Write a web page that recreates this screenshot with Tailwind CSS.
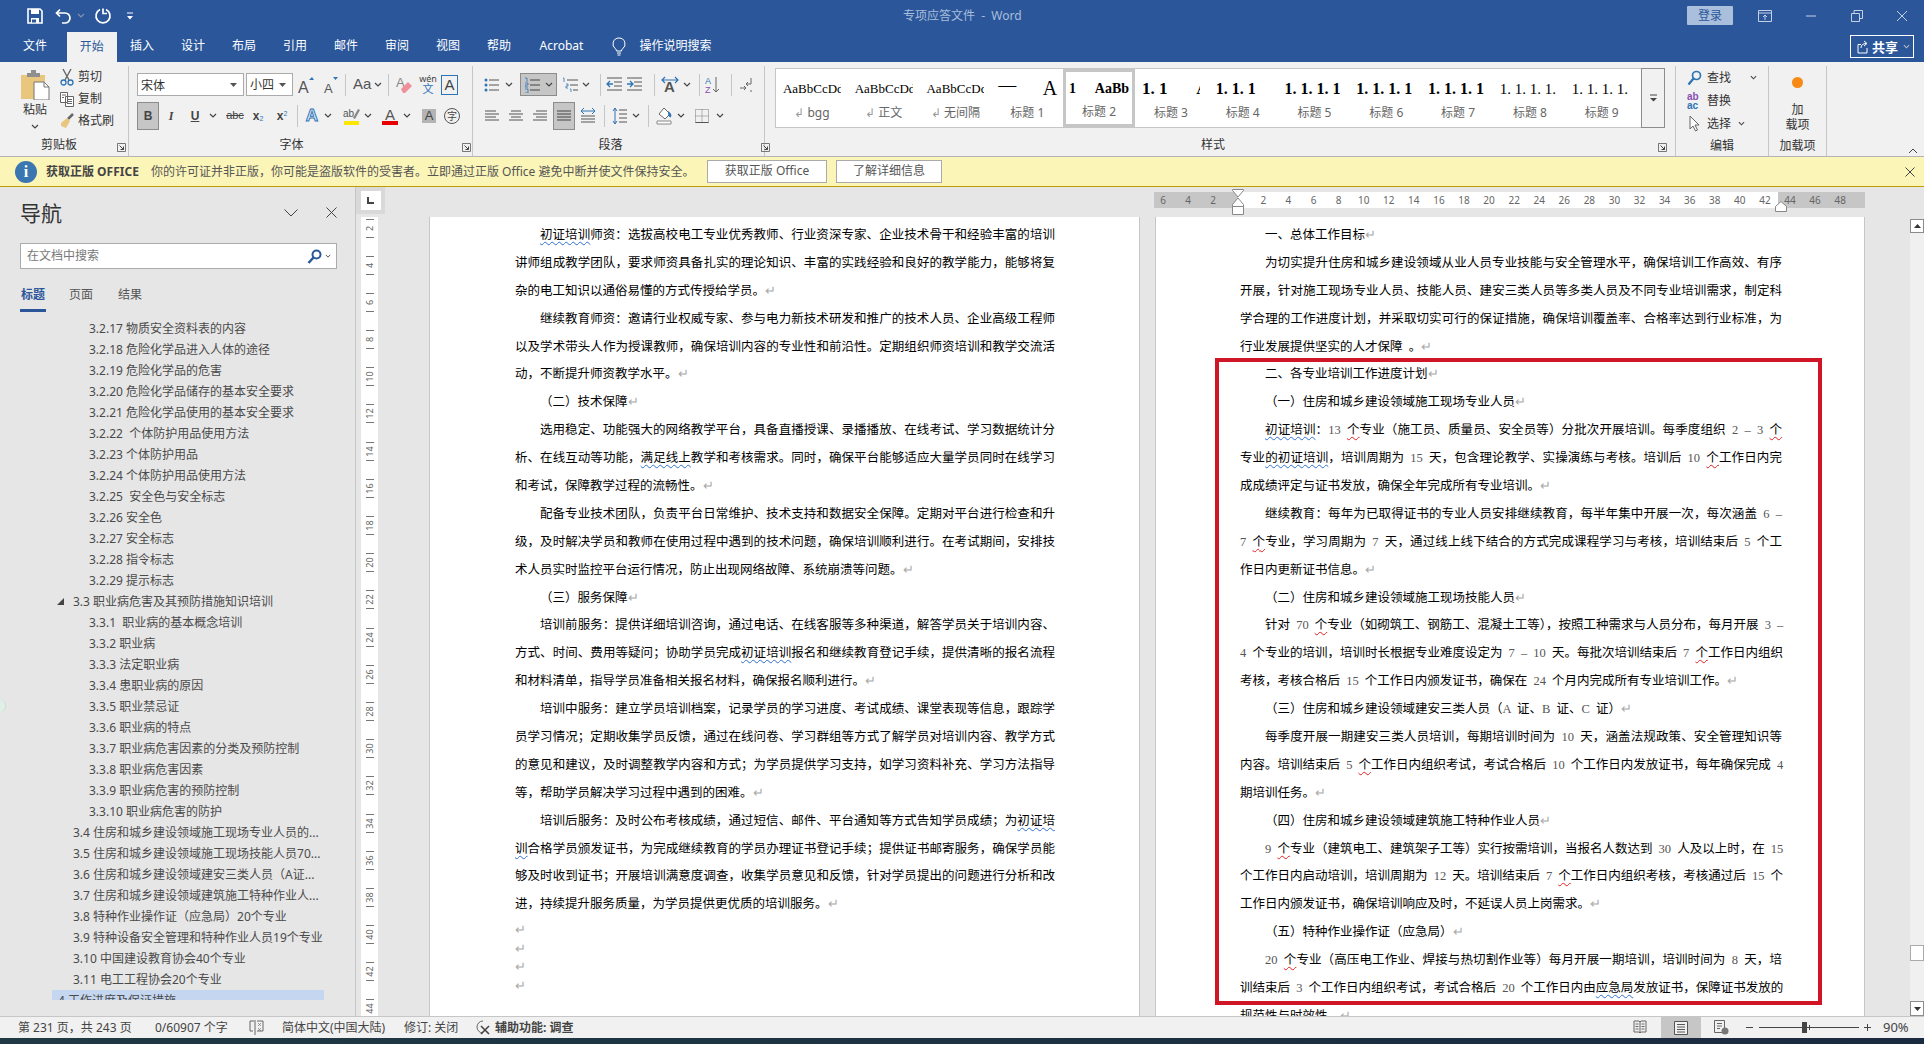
<!DOCTYPE html>
<html lang="zh-CN">
<head>
<meta charset="utf-8">
<title>专项应答文件 - Word</title>
<script src="https://cdn.jsdelivr.net/npm/@tailwindcss/browser@4"></script>
</head>
<body class="m-0 overflow-hidden bg-[#e6e6e6]">
<svg class="hidden" xmlns="http://www.w3.org/2000/svg">
  <symbol id="c" viewBox="0 0 8 5"><path d="M1 1l3 3 3-3" fill="none" stroke="#444" stroke-width="1.2"/></symbol>
  <symbol id="lau" viewBox="0 0 9 9"><path d="M.5 8.5v-8h8M.5.5v8h8v-8" fill="none" stroke="#777"/><path d="M2.5 2.5l4 4M6.5 3.5v3h-3" fill="none" stroke="#444"/></symbol>
  <symbol id="ll" viewBox="0 0 16 14"><path d="M1 2h11M1 5h14M1 8h11M1 11h14" stroke="#555" fill="none"/></symbol>
  <symbol id="lc" viewBox="0 0 16 14"><path d="M3 2h10M1 5h14M3 8h10M1 11h14" stroke="#555" fill="none"/></symbol>
  <symbol id="lr" viewBox="0 0 16 14"><path d="M4 2h11M1 5h14M4 8h11M1 11h14" stroke="#555" fill="none"/></symbol>
  <symbol id="lj" viewBox="0 0 16 14"><path d="M1 2h14M1 5h14M1 8h14M1 11h14" stroke="#444" fill="none"/></symbol>
</svg>
<div class="w-[1924px] h-[1044px] overflow-hidden relative flex flex-col text-[12px] text-[#444] [font-family:'Noto_Sans','Noto_Sans_CJK_SC',sans-serif]">

  <!-- title bar -->
  <div class="h-[31px] shrink-0 bg-[#2b579a] flex items-center">
    <div class="w-[903px] flex items-center pl-[25px]">
      <svg width="20" height="20" viewBox="0 0 20 20"><path d="M3 3h12l2 2v12H3z" fill="none" stroke="#fff" stroke-width="1.6"/><path d="M6 3h8v5H6zM6 12h8v5H6z" fill="#fff"/><path d="M7 13.5h4v3H7z" fill="#2b579a"/></svg>
      <svg class="ml-[9px]" width="20" height="20" viewBox="0 0 20 20"><path d="M6 3.5L2.500 7 6 10.500" fill="none" stroke="#fff" stroke-width="1.7"/><path d="M3 7h8a5 5 0 0 1 0 10H8" fill="none" stroke="#fff" stroke-width="1.7"/></svg>
      <svg class="ml-[3px] w-[8px] h-[5px] invert opacity-60"><use href="#c"/></svg>
      <svg class="ml-[8px]" width="20" height="20" viewBox="0 0 20 20"><path d="M7 3.500a7 7 0 1 0 6 0" fill="none" stroke="#fff" stroke-width="1.700"/><path d="M10 2.500v5h4" fill="none" stroke="#fff" stroke-width="1.700"/></svg>
      <svg class="ml-[12px]" width="10" height="10" viewBox="0 0 10 10"><path d="M2 2h6" stroke="#fff"/><path d="M2 5h6L5 8.500z" fill="#fff"/></svg>
    </div>
    <div class="text-[#a8bddb] text-[12px] whitespace-pre">专项应答文件  -  Word</div>
    <div class="ml-auto flex items-center">
      <div class="w-[46px] h-[19px] bg-[#a9bfdc] rounded-[1px] text-[#2b579a] text-center leading-[19px]">登录</div>
      <div class="ml-[9px] w-[46px] flex justify-center"><svg width="14" height="12" viewBox="0 0 14 12"><path d="M.5.5h13v11H.5zM.5 3h13M7 10V5M5 7l2-2 2 2" fill="none" stroke="#c5d2e6"/></svg></div>
      <div class="w-[46px] flex justify-center"><svg width="12" height="2" viewBox="0 0 12 2"><path d="M1 1h10" stroke="#c5d2e6"/></svg></div>
      <div class="w-[46px] flex justify-center"><svg width="12" height="12" viewBox="0 0 12 12"><path d="M.5 3.500h8v8h-8zM3 3V.5h8.500v8H9" fill="none" stroke="#c5d2e6"/></svg></div>
      <div class="w-[44px] flex justify-center"><svg width="12" height="12" viewBox="0 0 12 12"><path d="M1 1l10 10M11 1L1 11" stroke="#c5d2e6"/></svg></div>
    </div>
  </div>

  <!-- tabs -->
  <div class="h-[31px] shrink-0 bg-[#2b579a] flex items-end text-white text-[12px] pl-[10px]">
    <div class="w-[50px] h-[31px] leading-[30px] text-center">文件</div>
    <div class="ml-[7px] w-[49.500px] h-[30px] leading-[29px] text-center bg-[#f1f1f1] text-[#2b579a]">开始</div>
    <div class="w-[51px] h-[31px] leading-[30px] text-center">插入</div>
    <div class="w-[51px] h-[31px] leading-[30px] text-center">设计</div>
    <div class="w-[51px] h-[31px] leading-[30px] text-center">布局</div>
    <div class="w-[51px] h-[31px] leading-[30px] text-center">引用</div>
    <div class="w-[51px] h-[31px] leading-[30px] text-center">邮件</div>
    <div class="w-[51px] h-[31px] leading-[30px] text-center">审阅</div>
    <div class="w-[51px] h-[31px] leading-[30px] text-center">视图</div>
    <div class="w-[51px] h-[31px] leading-[30px] text-center">帮助</div>
    <div class="w-[74px] h-[31px] leading-[30px] text-center">Acrobat</div>
    <div class="ml-[13px] w-[16px] h-[31px] flex items-center"><svg width="14" height="19" viewBox="0 0 14 19"><path d="M7 1a6 6 0 0 0-3.500 10.900c.7.6 1 1.300 1 2.100h5c0-.8.3-1.500 1-2.100A6 6 0 0 0 7 1zM5 16h4M5.500 18h3" fill="none" stroke="#fff"/></svg></div>
    <div class="ml-[12px] h-[31px] leading-[30px]">操作说明搜索</div>
    <div class="ml-auto mr-[10px] mb-[4px] w-[64px] h-[23px] border border-white flex items-center pl-[6px] gap-[3px] font-bold text-[13px]">
      <svg width="12" height="14" viewBox="0 0 12 14"><path d="M1 4.500h3M1 4.500V13h9V8M4 8c0-3 2-4.500 5-4.500M7 1l3 2.500L7 6" fill="none" stroke="#fff"/></svg>
      <span class="leading-[20px]">共享</span>
      <svg class="ml-[2px] w-[7px] h-[5px] invert"><use href="#c"/></svg>
    </div>
  </div>

  <!-- ribbon -->
  <div class="h-[95px] shrink-0 bg-[#f1f1f1] border-b border-[#b4b4b4] flex relative">
    <!-- clipboard -->
    <div class="w-[129px] h-[90px] mt-[4px] border-r border-[#c6c6c6] flex flex-col shrink-0">
      <div class="flex h-[66px]">
        <div class="w-[60px] flex flex-col items-center pt-[4px] pl-[10px]">
          <svg width="30" height="30" viewBox="0 0 30 30"><path d="M1 5h24v24H1z" fill="#e8c67e"/><path d="M7 3h4V0h5v3h4v4H7z" fill="#8f8f8f"/><path d="M14 12h10l5 5v13H14z" fill="#fff" stroke="#777"/><path d="M24 12v5h5" fill="none" stroke="#777"/></svg>
          <div class="mt-[2px] leading-[16px] text-[#333]">粘贴</div>
          <svg class="mt-[6px] w-[8px] h-[5px]"><use href="#c"/></svg>
        </div>
        <div class="flex flex-col text-[#333]">
          <div class="h-[23px] flex items-center gap-[4px]"><svg width="14" height="18" viewBox="0 0 14 18"><path d="M3 1l6 11M11 1L5 12" stroke="#666" fill="none" stroke-width="1.400"/><circle cx="3.500" cy="14.500" r="2.500" fill="none" stroke="#2f74b5" stroke-width="1.300"/><circle cx="10.500" cy="14.500" r="2.500" fill="none" stroke="#2f74b5" stroke-width="1.300"/></svg>剪切</div>
          <div class="h-[23px] flex items-center gap-[4px]"><svg width="14" height="15" viewBox="0 0 14 15"><path d="M.5.5h7v10h-7zM5.500 4.500h8v10h-8zM2 3h4M2 5.500h2M7 7.500h5M7 9.500h5M7 11.500h5" fill="#fff" stroke="#666"/></svg>复制</div>
          <div class="h-[23px] flex items-center gap-[4px]"><svg width="14" height="16" viewBox="0 0 14 16"><path d="M8 6l5-5" stroke="#666" stroke-width="2.500"/><path d="M1 10l6-5 3 3-4 7-5-2z" fill="#e8c67e"/></svg>格式刷</div>
        </div>
      </div>
      <div class="relative h-[24px] leading-[26px] text-center pr-[10px] text-[#333]">剪贴板<svg class="absolute left-[117px] top-[11px] w-[9px] h-[9px]"><use href="#lau"/></svg></div>
    </div>

    <!-- font -->
    <div class="w-[344px] h-[90px] mt-[4px] border-r border-[#c6c6c6] shrink-0 flex flex-col pl-[8px] text-[#444]">
      <div class="flex items-center h-[23px] mt-[7px]">
        <div class="w-[107px] h-[23px] bg-white border border-[#ababab] flex items-center justify-between pl-[3px] pr-[6px] text-[#333] [font-family:'Noto_Sans_CJK_SC',sans-serif]">宋体<svg class="w-[7px] h-[4px]" viewBox="0 0 7 4"><path d="M0 0h7L3.500 4z" fill="#555"/></svg></div>
        <div class="ml-[2px] w-[47px] h-[23px] bg-white border border-[#ababab] flex items-center justify-between pl-[3px] pr-[6px] text-[#333]">小四<svg class="w-[7px] h-[4px]" viewBox="0 0 7 4"><path d="M0 0h7L3.500 4z" fill="#555"/></svg></div>
        <div class="ml-[1px] w-[24px] flex justify-center"><svg width="16" height="18" viewBox="0 0 16 18"><text x="0" y="17" font-size="16" fill="#555" font-family="Liberation Sans">A</text><path d="M11 4l3-3 2 3z" fill="#2f74b5"/></svg></div>
        <div class="w-[24px] flex justify-center"><svg width="15" height="18" viewBox="0 0 15 18"><text x="1" y="17" font-size="13" fill="#555" font-family="Liberation Sans">A</text><path d="M10 1h5l-2.500 3z" fill="#2f74b5"/></svg></div>
        <div class="ml-[3px] w-px h-[22px] bg-[#c6c6c6]"></div>
        <div class="ml-[7px] flex items-center gap-[3px] w-[30px] text-[15px] text-[#555]"><span class="[font-family:'Liberation_Sans']">Aa</span><svg class="w-[8px] h-[5px] shrink-0"><use href="#c"/></svg></div>
        <div class="ml-[5px] w-px h-[22px] bg-[#c6c6c6]"></div>
        <div class="ml-[5px] w-[20px] flex justify-center"><svg width="18" height="20" viewBox="0 0 18 20"><text x="1" y="12" font-size="13" fill="#888" font-family="Liberation Sans">A</text><path d="M6 14l7-7 4 4-7 7H8z" fill="#ee8f9a"/></svg></div>
        <div class="ml-[4px] w-[20px] text-center text-[9px] leading-[10px] text-[#444]">wén<br><span class="text-[11px] text-[#2f74b5]">文</span></div>
        <div class="ml-[3px] w-[17px] h-[20px] border border-[#2f74b5] text-center text-[15px] leading-[18px] [font-family:'Liberation_Sans']">A</div>
      </div>
      <div class="flex items-center h-[23px] mt-[8px]">
        <div class="w-[22px] h-[28px] bg-[#c6c6c6] border border-[#8c8c8c] text-center font-bold leading-[26px] text-[12px] [font-family:'Liberation_Sans']">B</div>
        <div class="ml-[1px] w-[22px] text-center italic font-bold text-[12px] [font-family:'Liberation_Serif']">I</div>
        <div class="ml-[2px] w-[22px] text-center underline font-bold [font-family:'Liberation_Sans']">U</div>
        <div class="w-[14px] flex justify-center"><svg class="w-[8px] h-[5px]"><use href="#c"/></svg></div>
        <div class="ml-[2px] w-[26px] text-center line-through text-[11px] [font-family:'Liberation_Sans']">abc</div>
        <div class="w-[20px] text-center font-bold [font-family:'Liberation_Sans']">x<sub class="text-[7px] text-[#2f74b5] font-normal">2</sub></div>
        <div class="ml-[4px] w-[20px] text-center font-bold [font-family:'Liberation_Sans']">x<sup class="text-[7px] text-[#2f74b5] font-normal">2</sup></div>
        <div class="ml-[5px] w-px h-[22px] bg-[#c6c6c6]"></div>
        <div class="ml-[4px] w-[20px] text-center text-[17px] font-bold text-[#eaf2fa] [-webkit-text-stroke:1px_#2f74b5] [font-family:'Liberation_Sans']">A</div>
        <div class="w-[12px] flex justify-center"><svg class="w-[8px] h-[5px]"><use href="#c"/></svg></div>
        <div class="ml-[6px] w-[22px] flex justify-center"><svg width="17" height="20" viewBox="0 0 17 20"><text x="0" y="11" font-size="10" fill="#555" font-family="Liberation Sans">ab</text><path d="M10 12l5-9 2 1-5 9z" fill="#888"/><path d="M1 15h15v4H1z" fill="#ffe600"/></svg></div>
        <div class="w-[12px] flex justify-center"><svg class="w-[8px] h-[5px]"><use href="#c"/></svg></div>
        <div class="ml-[5px] w-[22px] flex justify-center"><svg width="17" height="20" viewBox="0 0 17 20"><text x="3" y="14" font-size="15" fill="#555" font-family="Liberation Sans">A</text><path d="M0 15h16v4H0z" fill="#e60000"/></svg></div>
        <div class="w-[12px] flex justify-center"><svg class="w-[8px] h-[5px]"><use href="#c"/></svg></div>
        <div class="ml-[6px] w-[20px] flex justify-center"><div class="w-[14px] h-[14px] bg-[#b4b4b4] text-center text-[13px] leading-[14px] [font-family:'Liberation_Sans']">A</div></div>
        <div class="ml-[3px] w-[20px] flex justify-center"><div class="w-[16px] h-[16px] rounded-full border border-[#555] text-center text-[10px] leading-[14px]">字</div></div>
      </div>
      <div class="relative mt-auto h-[24px] leading-[26px] text-center pr-[26px] text-[#333]">字体<svg class="absolute left-[325px] top-[11px] w-[9px] h-[9px]"><use href="#lau"/></svg></div>
    </div>

    <!-- paragraph -->
    <div class="w-[292px] h-[90px] mt-[4px] border-r border-[#c6c6c6] shrink-0 flex flex-col pl-[7px]">
      <div class="flex items-center h-[23px] mt-[7px]">
        <div class="w-[24px] flex justify-center"><svg width="16" height="16" viewBox="0 0 16 16"><path d="M5 3h10M5 8h10M5 13h10" stroke="#555"/><circle cx="2" cy="3" r="1.500" fill="#2f74b5"/><circle cx="2" cy="8" r="1.500" fill="#2f74b5"/><circle cx="2" cy="13" r="1.500" fill="#2f74b5"/></svg></div>
        <div class="w-[10px] flex justify-center"><svg class="w-[8px] h-[5px]"><use href="#c"/></svg></div>
        <div class="ml-[6px] w-[37px] h-[23px] bg-[#c6c6c6] border border-[#8c8c8c] flex items-center justify-center gap-[5px]"><svg width="15" height="16" viewBox="0 0 15 16"><path d="M5 3h10M5 8h10M5 13h10" stroke="#444"/><path d="M0 1h2v4M0 6h3v2H0v2h3M0 12h3v4H0" fill="none" stroke="#2f74b5" stroke-width=".8"/></svg><svg class="w-[8px] h-[5px]"><use href="#c"/></svg></div>
        <div class="ml-[3px] w-[20px] flex justify-center"><svg width="17" height="16" viewBox="0 0 17 16"><path d="M5 3h11M8 8h8M11 13h5" stroke="#555"/><path d="M1 1h1v4M4 7h2v2H4v2h2M8 12h1v3" fill="none" stroke="#2f74b5" stroke-width=".8"/></svg></div>
        <div class="w-[12px] flex justify-center"><svg class="w-[8px] h-[5px]"><use href="#c"/></svg></div>
        <div class="ml-[8px] w-px h-[22px] bg-[#c6c6c6]"></div>
        <div class="ml-[3px] w-[20px] flex justify-center"><svg width="17" height="15" viewBox="0 0 17 15"><path d="M1 1h15M8 5h8M8 9h8M1 13h15" stroke="#555"/><path d="M7 7H1M4 4L1 7l3 3" fill="none" stroke="#2f74b5" stroke-width="1.300"/></svg></div>
        <div class="w-[20px] flex justify-center"><svg width="17" height="15" viewBox="0 0 17 15"><path d="M1 1h15M8 5h8M8 9h8M1 13h15" stroke="#555"/><path d="M1 7h6M4 4l3 3-3 3" fill="none" stroke="#2f74b5" stroke-width="1.300"/></svg></div>
        <div class="ml-[10px] w-px h-[22px] bg-[#c6c6c6]"></div>
        <div class="ml-[3px] w-[24px] flex justify-center"><svg width="18" height="17" viewBox="0 0 18 17"><text x="3" y="16" font-size="15" font-weight="bold" fill="#555" font-family="Liberation Sans">A</text><path d="M1 4h16M4 1L1 4l3 3M14 1l3 3-3 3" fill="none" stroke="#2f74b5" stroke-width="1.200"/></svg></div>
        <div class="w-[10px] flex justify-center"><svg class="w-[8px] h-[5px]"><use href="#c"/></svg></div>
        <div class="ml-[7px] w-px h-[22px] bg-[#c6c6c6]"></div>
        <div class="ml-[3px] w-[20px] flex justify-center"><svg width="16" height="18" viewBox="0 0 16 18"><text x="0" y="8" font-size="9" fill="#2f74b5" font-family="Liberation Sans">A</text><text x="0" y="17" font-size="9" fill="#8a4fb5" font-family="Liberation Sans">Z</text><path d="M11 1v15M8 13l3 3 3-3" fill="none" stroke="#666"/></svg></div>
        <div class="ml-[8px] w-px h-[22px] bg-[#c6c6c6]"></div>
        <div class="ml-[4px] w-[20px] flex justify-center"><svg width="14" height="16" viewBox="0 0 14 16"><path d="M12 1v6H7M9 5L7 7l2 2M1 11h6M5 9l2 2-2 2M12 13v2" fill="none" stroke="#666"/></svg></div>
      </div>
      <div class="flex items-center h-[23px] mt-[8px]">
        <div class="w-[24px] flex justify-center"><svg class="w-[16px] h-[14px]"><use href="#ll"/></svg></div>
        <div class="w-[24px] flex justify-center"><svg class="w-[16px] h-[14px]"><use href="#lc"/></svg></div>
        <div class="w-[24px] flex justify-center"><svg class="w-[16px] h-[14px]"><use href="#lr"/></svg></div>
        <div class="ml-[1px] w-[22px] h-[28px] bg-[#c6c6c6] border border-[#8c8c8c] flex items-center justify-center"><svg class="w-[16px] h-[14px]"><use href="#lj"/></svg></div>
        <div class="ml-[1px] w-[24px] flex justify-center"><svg width="16" height="17" viewBox="0 0 16 17"><path d="M1 4h14M4 1L1 4l3 3M12 1l3 3-3 3" fill="none" stroke="#2f74b5"/><path d="M1 9h14M1 12h14M1 15h14" stroke="#555"/></svg></div>
        <div class="ml-[4px] w-px h-[22px] bg-[#c6c6c6]"></div>
        <div class="ml-[2px] w-[24px] flex justify-center"><svg width="15" height="18" viewBox="0 0 15 18"><path d="M7 3h8M7 7h8M7 11h8M7 15h8" stroke="#555"/><path d="M3 1v16M1 4l2-3 2 3M1 14l2 3 2-3" fill="none" stroke="#2f74b5"/></svg></div>
        <div class="w-[10px] flex justify-center"><svg class="w-[8px] h-[5px]"><use href="#c"/></svg></div>
        <div class="ml-[7px] w-px h-[22px] bg-[#c6c6c6]"></div>
        <div class="ml-[3px] w-[24px] flex justify-center"><svg width="17" height="19" viewBox="0 0 17 19"><path d="M3 8l5-6 6 6-5 5z" fill="#fff" stroke="#666"/><path d="M12 5c3 2 4 4 3 6-2 1-3-1-3-6z" fill="#2f74b5"/><path d="M1 15h14v3H1z" fill="#fff" stroke="#888"/></svg></div>
        <div class="w-[10px] flex justify-center"><svg class="w-[8px] h-[5px]"><use href="#c"/></svg></div>
        <div class="ml-[4px] w-[24px] flex justify-center"><svg width="14" height="14" viewBox="0 0 14 14"><path d="M.5.500h13v13H.5zM7 .5v13M.5 7h13" fill="none" stroke="#777" stroke-dasharray="1 1"/><path d="M.5 13.500h13" stroke="#555"/></svg></div>
        <div class="w-[12px] flex justify-center"><svg class="w-[8px] h-[5px]"><use href="#c"/></svg></div>
      </div>
      <div class="relative mt-auto h-[24px] leading-[26px] text-center pr-[23px] text-[#333]">段落<svg class="absolute left-[281px] top-[11px] w-[9px] h-[9px]"><use href="#lau"/></svg></div>
    </div>

    <!-- styles -->
    <div class="w-[911px] h-[90px] mt-[4px] border-r border-[#c6c6c6] shrink-0 flex flex-col pl-[10px]">
      <div class="flex h-[60px] mt-[2px] w-[890px]">
        <div class="w-[866px] h-[60px] bg-white border-y border-l border-[#c6c6c6] flex text-[#666] overflow-hidden">
          <div class="w-[71.800px] shrink-0 flex flex-col items-center"><div class="h-[34px] w-[58px] overflow-hidden whitespace-nowrap leading-[40px] text-[13px] text-black [font-family:'Liberation_Serif']">AaBbCcDdE</div><div class="h-[24px] leading-[20px] whitespace-pre"><span class="text-[#999]">↲ </span>bgg</div></div>
          <div class="w-[71.800px] shrink-0 flex flex-col items-center"><div class="h-[34px] w-[58px] overflow-hidden whitespace-nowrap leading-[40px] text-[13px] text-black [font-family:'Liberation_Serif']">AaBbCcDdE</div><div class="h-[24px] leading-[20px] whitespace-pre"><span class="text-[#999]">↲ </span>正文</div></div>
          <div class="w-[71.800px] shrink-0 flex flex-col items-center"><div class="h-[34px] w-[58px] overflow-hidden whitespace-nowrap leading-[40px] text-[13px] text-black [font-family:'Liberation_Serif']">AaBbCcDdE</div><div class="h-[24px] leading-[20px] whitespace-pre"><span class="text-[#999]">↲ </span>无间隔</div></div>
          <div class="w-[71.800px] shrink-0 flex flex-col items-center"><div class="h-[34px] w-[60px] flex justify-between items-center text-[20px] leading-[40px] pt-[3px] text-black [font-family:'Liberation_Serif','Noto_Sans_CJK_SC']"><span class="font-light">一</span><span>A</span></div><div class="h-[24px] leading-[20px]">标题 1</div></div>
          <div class="w-[71.800px] shrink-0 h-[58px] flex flex-col items-center border-[3px] border-[#c6c6c6]"><div class="h-[31px] w-[60px] flex justify-between overflow-hidden whitespace-nowrap leading-[34px] text-[14px] font-bold text-black [font-family:'Liberation_Serif']"><span>1</span><span class="ml-[10px]">AaBb</span></div><div class="h-[22px] leading-[20px]">标题 2</div></div>
          <div class="w-[71.800px] shrink-0 flex flex-col items-center"><div class="h-[34px] w-[58px] overflow-hidden whitespace-pre leading-[40px] text-[17px] font-bold text-black [font-family:'Liberation_Serif']">1. 1       A</div><div class="h-[24px] leading-[20px]">标题 3</div></div>
          <div class="w-[71.800px] shrink-0 flex flex-col items-center"><div class="h-[34px] w-[62px] overflow-hidden whitespace-pre leading-[40px] text-[16px] font-bold text-black [font-family:'Liberation_Serif']"> 1. 1. 1</div><div class="h-[24px] leading-[20px]">标题 4</div></div>
          <div class="w-[71.800px] shrink-0 flex flex-col items-center"><div class="h-[34px] w-[60px] overflow-hidden whitespace-pre leading-[40px] text-[16px] font-bold text-black [font-family:'Liberation_Serif']">1. 1. 1. 1</div><div class="h-[24px] leading-[20px]">标题 5</div></div>
          <div class="w-[71.800px] shrink-0 flex flex-col items-center"><div class="h-[34px] w-[60px] overflow-hidden whitespace-pre leading-[40px] text-[16px] font-bold text-black [font-family:'Liberation_Serif']">1. 1. 1. 1</div><div class="h-[24px] leading-[20px]">标题 6</div></div>
          <div class="w-[71.800px] shrink-0 flex flex-col items-center"><div class="h-[34px] w-[60px] overflow-hidden whitespace-pre leading-[40px] text-[16px] font-bold text-black [font-family:'Liberation_Serif']">1. 1. 1. 1</div><div class="h-[24px] leading-[20px]">标题 7</div></div>
          <div class="w-[71.800px] shrink-0 flex flex-col items-center"><div class="h-[34px] w-[60px] overflow-hidden whitespace-pre leading-[40px] text-[15px] text-black [font-family:'Liberation_Serif']">1. 1. 1. 1.</div><div class="h-[24px] leading-[20px]">标题 8</div></div>
          <div class="w-[71.800px] shrink-0 flex flex-col items-center"><div class="h-[34px] w-[60px] overflow-hidden whitespace-pre leading-[40px] text-[15px] text-black [font-family:'Liberation_Serif']">1. 1. 1. 1.</div><div class="h-[24px] leading-[20px]">标题 9</div></div>
        </div>
        <div class="w-[24px] h-[60px] bg-[#f1f1f1] border border-[#8c8c8c] flex flex-col items-center justify-center"><svg width="9" height="8" viewBox="0 0 9 8"><path d="M1 1h7" stroke="#444"/><path d="M1 4h7L4.500 7.500z" fill="#444"/></svg></div>
      </div>
      <div class="relative mt-auto h-[24px] leading-[26px] text-center text-[#333]"><span class="block w-[876px]">样式</span><svg class="absolute left-[883px] top-[11px] w-[9px] h-[9px]"><use href="#lau"/></svg></div>
    </div>

    <!-- editing -->
    <div class="w-[93px] h-[90px] mt-[4px] border-r border-[#c6c6c6] shrink-0 flex flex-col text-[#333] pl-[11px]">
      <div class="h-[23px] flex items-center gap-[5px]"><svg width="15" height="16" viewBox="0 0 15 16"><circle cx="9.500" cy="5.500" r="4" fill="none" stroke="#2f74b5" stroke-width="1.700"/><path d="M6.500 8.500L1.500 14.500" stroke="#2f74b5" stroke-width="2.300"/></svg>查找<svg class="ml-[14px] w-[7px] h-[5px]"><use href="#c"/></svg></div>
      <div class="h-[23px] flex items-center gap-[5px]"><span class="w-[15px] text-[10px] leading-[9px] font-bold [font-family:'Liberation_Sans']"><span class="text-[#8a4fb5]">ab</span><br><span class="text-[#2f74b5]">ac</span></span>替换</div>
      <div class="h-[23px] flex items-center gap-[5px]"><svg width="15" height="17" viewBox="0 0 15 17"><path d="M3 1v13l3-3 2.500 5 2-1-2.500-5h4z" fill="#fff" stroke="#666"/></svg>选择<svg class="ml-[2px] w-[7px] h-[5px]"><use href="#c"/></svg></div>
      <div class="mt-auto h-[21px] leading-[21px] text-center pr-[11px]">编辑</div>
    </div>

    <!-- add-ins -->
    <div class="w-[58px] h-[90px] mt-[4px] border-r border-[#c6c6c6] shrink-0 flex flex-col items-center text-[#333]">
      <div class="mt-[11px] w-[11px] h-[11px] rounded-full bg-[#f68a12] blur-[0.5px]"></div>
      <div class="mt-[14px] leading-[15px] text-center">加<br>载项</div>
      <div class="mt-auto h-[24px] leading-[28px]">加载项</div>
    </div>
    <svg class="absolute right-[6px] bottom-[2px]" width="10" height="6" viewBox="0 0 10 6"><path d="M1 5l4-4 4 4" fill="none" stroke="#444"/></svg>
  </div>

  <!-- message bar -->
  <div class="h-[30px] shrink-0 bg-[#fcf5b8] border-b border-[#c19c00] flex items-center text-[#555] pl-[15px]">
    <div class="w-[22px] h-[22px] rounded-full bg-[#3a76b0] text-white text-center font-bold text-[16px] leading-[22px] [font-family:'Liberation_Serif']">i</div>
    <div class="ml-[9px] w-[105px] font-bold text-[#444] whitespace-nowrap">获取正版 OFFICE</div>
    <div class="whitespace-nowrap w-[556px] text-[#555]">你的许可证并非正版，你可能是盗版软件的受害者。立即通过正版 Office 避免中断并使文件保持安全。</div>
    <div class="w-[120px] h-[23px] bg-white border border-[#aaa] text-center leading-[20px] whitespace-nowrap">获取正版 Office</div>
    <div class="ml-[9px] w-[106px] h-[23px] bg-white border border-[#aaa] text-center leading-[20px]">了解详细信息</div>
    <svg class="ml-auto mr-[9px]" width="10" height="10" viewBox="0 0 10 10"><path d="M.5.5l9 9M9.500.5l-9 9" stroke="#444"/></svg>
  </div>

  <!-- main -->
  <div class="h-[829px] shrink-0 flex overflow-hidden">
    <!-- nav -->
    <div class="w-[356px] shrink-0 border-r border-[#c6c6c6] flex flex-col pl-[20px] relative">
      <div class="h-[52px] flex items-center pr-[18px] pb-[1px]">
        <span class="text-[21px] text-[#333] leading-[50px]">导航</span>
        <svg class="ml-auto" width="14" height="8" viewBox="0 0 14 8"><path d="M.5.500L7 7l6.500-6.500" fill="none" stroke="#444"/></svg>
        <svg class="ml-[28px]" width="11" height="11" viewBox="0 0 11 11"><path d="M.5.5l10 10M10.500.5l-10 10" stroke="#444"/></svg>
      </div>
      <div class="mt-[4px] w-[317px] h-[26px] bg-white border border-[#ababab] flex items-center pl-[6px] pr-[5px] text-[#777]">
        在文档中搜索
        <svg class="ml-auto" width="15" height="15" viewBox="0 0 15 15"><circle cx="9.500" cy="5.500" r="4" fill="none" stroke="#2b579a" stroke-width="2"/><path d="M6.500 8.500L1.500 14" stroke="#2b579a" stroke-width="2.500"/></svg>
        <svg class="ml-[3px] w-[6px] h-[4px]"><use href="#c"/></svg>
      </div>
      <div class="flex mt-[14px] h-[29px] text-[#555]">
        <div class="w-[26px] h-[29px] border-b-[3px] border-[#2b579a] text-[#2b579a] font-bold text-center leading-[24px]">标题</div>
        <div class="ml-[23px] leading-[24px]">页面</div>
        <div class="ml-[25px] leading-[24px]">结果</div>
      </div>
      <div class="mt-[6px] h-[682px] overflow-hidden -ml-[20px] w-[324px] *:h-[21px] *:leading-[21px] *:whitespace-pre text-[#4a4a4a]">
        <div class="pl-[89px]">3.2.17 物质安全资料表的内容</div>
        <div class="pl-[89px]">3.2.18 危险化学品进入人体的途径</div>
        <div class="pl-[89px]">3.2.19 危险化学品的危害</div>
        <div class="pl-[89px]">3.2.20 危险化学品储存的基本安全要求</div>
        <div class="pl-[89px]">3.2.21 危险化学品使用的基本安全要求</div>
        <div class="pl-[89px]">3.2.22  个体防护用品使用方法</div>
        <div class="pl-[89px]">3.2.23 个体防护用品</div>
        <div class="pl-[89px]">3.2.24 个体防护用品使用方法</div>
        <div class="pl-[89px]">3.2.25  安全色与安全标志</div>
        <div class="pl-[89px]">3.2.26 安全色</div>
        <div class="pl-[89px]">3.2.27 安全标志</div>
        <div class="pl-[89px]">3.2.28 指令标志</div>
        <div class="pl-[89px]">3.2.29 提示标志</div>
        <div class="pl-[57px] flex items-center gap-[9px]"><svg width="7" height="7" viewBox="0 0 7 7"><path d="M7 0v7H0z" fill="#444"/></svg><span>3.3 职业病危害及其预防措施知识培训</span></div>
        <div class="pl-[89px]">3.3.1  职业病的基本概念培训</div>
        <div class="pl-[89px]">3.3.2 职业病</div>
        <div class="pl-[89px]">3.3.3 法定职业病</div>
        <div class="pl-[89px]">3.3.4 患职业病的原因</div>
        <div class="pl-[89px]">3.3.5 职业禁忌证</div>
        <div class="pl-[89px]">3.3.6 职业病的特点</div>
        <div class="pl-[89px]">3.3.7 职业病危害因素的分类及预防控制</div>
        <div class="pl-[89px]">3.3.8 职业病危害因素</div>
        <div class="pl-[89px]">3.3.9 职业病危害的预防控制</div>
        <div class="pl-[89px]">3.3.10 职业病危害的防护</div>
        <div class="pl-[73px]">3.4 住房和城乡建设领域施工现场专业人员的...</div>
        <div class="pl-[73px]">3.5 住房和城乡建设领域施工现场技能人员70...</div>
        <div class="pl-[73px]">3.6 住房和城乡建设领域建安三类人员（A证...</div>
        <div class="pl-[73px]">3.7 住房和城乡建设领域建筑施工特种作业人...</div>
        <div class="pl-[73px]">3.8 特种作业操作证（应急局）20个专业</div>
        <div class="pl-[73px]">3.9 特种设备安全管理和特种作业人员19个专业</div>
        <div class="pl-[73px]">3.10 中国建设教育协会40个专业</div>
        <div class="pl-[73px]">3.11 电工工程协会20个专业</div>
        <div class="ml-[52px] pl-[6px] bg-[#c5d6f0]">4 工作进度及保证措施</div>
      </div>
      <div class="absolute left-0 top-[513px] w-[6px] h-[12px] rounded-r-full bg-[#e2efe8] border-r border-[#bfe3cc]"></div>
    </div>

    <!-- vertical ruler -->
    <div class="w-[29px] shrink-0 flex flex-col">
      <div class="h-[27px] w-[29px] shrink-0 bg-[#d9d9d9] flex justify-center items-center"><div class="w-[20px] h-[19px] bg-white flex items-center justify-center"><svg width="7" height="7" viewBox="0 0 7 7"><path d="M1 0v6h6" fill="none" stroke="#444" stroke-width="2"/></svg></div></div>
      <div class="h-[3px] shrink-0"></div>
      <div class="ml-[5px] w-[17px] flex-1 bg-white overflow-hidden text-[9px] text-[#666] *:h-[37.200px] *:flex *:flex-col *:items-center *:justify-center">
        <div class="-mt-[7.600px]"><i class="block w-[8px] h-px bg-[#777]"></i><span class="h-[17px] w-[17px] flex items-center justify-center -rotate-90">2</span><i class="block w-[8px] h-px bg-[#777]"></i></div>
        <div><i class="block w-[8px] h-px bg-[#777]"></i><span class="h-[17px] w-[17px] flex items-center justify-center -rotate-90">4</span><i class="block w-[8px] h-px bg-[#777]"></i></div>
        <div><i class="block w-[8px] h-px bg-[#777]"></i><span class="h-[17px] w-[17px] flex items-center justify-center -rotate-90">6</span><i class="block w-[8px] h-px bg-[#777]"></i></div>
        <div><i class="block w-[8px] h-px bg-[#777]"></i><span class="h-[17px] w-[17px] flex items-center justify-center -rotate-90">8</span><i class="block w-[8px] h-px bg-[#777]"></i></div>
        <div><i class="block w-[8px] h-px bg-[#777]"></i><span class="h-[17px] w-[17px] flex items-center justify-center -rotate-90">10</span><i class="block w-[8px] h-px bg-[#777]"></i></div>
        <div><i class="block w-[8px] h-px bg-[#777]"></i><span class="h-[17px] w-[17px] flex items-center justify-center -rotate-90">12</span><i class="block w-[8px] h-px bg-[#777]"></i></div>
        <div><i class="block w-[8px] h-px bg-[#777]"></i><span class="h-[17px] w-[17px] flex items-center justify-center -rotate-90">14</span><i class="block w-[8px] h-px bg-[#777]"></i></div>
        <div><i class="block w-[8px] h-px bg-[#777]"></i><span class="h-[17px] w-[17px] flex items-center justify-center -rotate-90">16</span><i class="block w-[8px] h-px bg-[#777]"></i></div>
        <div><i class="block w-[8px] h-px bg-[#777]"></i><span class="h-[17px] w-[17px] flex items-center justify-center -rotate-90">18</span><i class="block w-[8px] h-px bg-[#777]"></i></div>
        <div><i class="block w-[8px] h-px bg-[#777]"></i><span class="h-[17px] w-[17px] flex items-center justify-center -rotate-90">20</span><i class="block w-[8px] h-px bg-[#777]"></i></div>
        <div><i class="block w-[8px] h-px bg-[#777]"></i><span class="h-[17px] w-[17px] flex items-center justify-center -rotate-90">22</span><i class="block w-[8px] h-px bg-[#777]"></i></div>
        <div><i class="block w-[8px] h-px bg-[#777]"></i><span class="h-[17px] w-[17px] flex items-center justify-center -rotate-90">24</span><i class="block w-[8px] h-px bg-[#777]"></i></div>
        <div><i class="block w-[8px] h-px bg-[#777]"></i><span class="h-[17px] w-[17px] flex items-center justify-center -rotate-90">26</span><i class="block w-[8px] h-px bg-[#777]"></i></div>
        <div><i class="block w-[8px] h-px bg-[#777]"></i><span class="h-[17px] w-[17px] flex items-center justify-center -rotate-90">28</span><i class="block w-[8px] h-px bg-[#777]"></i></div>
        <div><i class="block w-[8px] h-px bg-[#777]"></i><span class="h-[17px] w-[17px] flex items-center justify-center -rotate-90">30</span><i class="block w-[8px] h-px bg-[#777]"></i></div>
        <div><i class="block w-[8px] h-px bg-[#777]"></i><span class="h-[17px] w-[17px] flex items-center justify-center -rotate-90">32</span><i class="block w-[8px] h-px bg-[#777]"></i></div>
        <div><i class="block w-[8px] h-px bg-[#777]"></i><span class="h-[17px] w-[17px] flex items-center justify-center -rotate-90">34</span><i class="block w-[8px] h-px bg-[#777]"></i></div>
        <div><i class="block w-[8px] h-px bg-[#777]"></i><span class="h-[17px] w-[17px] flex items-center justify-center -rotate-90">36</span><i class="block w-[8px] h-px bg-[#777]"></i></div>
        <div><i class="block w-[8px] h-px bg-[#777]"></i><span class="h-[17px] w-[17px] flex items-center justify-center -rotate-90">38</span><i class="block w-[8px] h-px bg-[#777]"></i></div>
        <div><i class="block w-[8px] h-px bg-[#777]"></i><span class="h-[17px] w-[17px] flex items-center justify-center -rotate-90">40</span><i class="block w-[8px] h-px bg-[#777]"></i></div>
        <div><i class="block w-[8px] h-px bg-[#777]"></i><span class="h-[17px] w-[17px] flex items-center justify-center -rotate-90">42</span><i class="block w-[8px] h-px bg-[#777]"></i></div>
        <div><i class="block w-[8px] h-px bg-[#777]"></i><span class="h-[17px] w-[17px] flex items-center justify-center -rotate-90">44</span><i class="block w-[8px] h-px bg-[#777]"></i></div>
      </div>
    </div>

    <!-- document -->
    <div class="w-[1525px] shrink-0 flex flex-col relative overflow-hidden">
      <div class="h-[30px] shrink-0 pt-[5px] pl-[769px]">
        <div class="relative w-[711px] h-[16px] bg-white">
          <div class="absolute left-0 top-0 w-[84px] h-[16px] bg-[#c6c6c6]"></div>
          <div class="absolute left-[624px] top-0 w-[87px] h-[16px] bg-[#c6c6c6]"></div>
          <div class="relative flex -ml-[3.500px] text-[10px] leading-[16px] text-[#666] text-center *:w-[25.090px] *:shrink-0">
            <span>6</span><span>4</span><span>2</span><span></span><span>2</span><span>4</span><span>6</span><span>8</span><span>10</span><span>12</span><span>14</span><span>16</span><span>18</span><span>20</span><span>22</span><span>24</span><span>26</span><span>28</span><span>30</span><span>32</span><span>34</span><span>36</span><span>38</span><span>40</span><span>42</span><span>44</span><span>46</span><span>48</span>
          </div>
          <svg class="absolute left-[78px] -top-[3px]" width="12" height="28" viewBox="0 0 12 28"><path d="M.5.5h11v1L6 8 .5 1.500z" fill="#fff" stroke="#888"/><path d="M6 9l5.500 6.500v2H.5v-2zM.5 17.500h11v8H.5z" fill="#fff" stroke="#888"/></svg>
          <svg class="absolute left-[621px] top-[9px]" width="12" height="11" viewBox="0 0 12 11"><path d="M6 .5l5.500 5v5H.5v-5z" fill="#fff" stroke="#888"/></svg>
        </div>
      </div>
      <div class="flex flex-1 pl-[44px] gap-[15px] overflow-hidden text-black [font-family:'Liberation_Serif','Noto_Sans_CJK_SC',serif] text-[12.500px] [word-spacing:3px]">

        <!-- page 1 -->
        <div class="w-[711px] shrink-0 bg-white border-x border-[#c6c6c6] pt-[5px] pl-[85px] pr-[84px] *:h-[27.900px] *:leading-[27.900px] *:whitespace-nowrap">
          <div class="pl-[25px] [text-align-last:justify]"><u class="underline decoration-wavy decoration-[#2f6fd0] decoration-1 underline-offset-2">初证培训</u>师资：选拔高校电工专业优秀教师、行业资深专家、企业技术骨干和经验丰富的培训</div>
          <div class="[text-align-last:justify]">讲师组成教学团队，要求师资具备扎实的理论知识、丰富的实践经验和良好的教学能力，能够将复</div>
          <div>杂的电工知识以通俗易懂的方式传授给学员。<span class="text-[#aaa]">↵</span></div>
          <div class="pl-[25px] [text-align-last:justify]">继续教育师资：邀请行业权威专家、参与电力新技术研发和推广的技术人员、企业高级工程师</div>
          <div class="[text-align-last:justify]">以及学术带头人作为授课教师，确保培训内容的专业性和前沿性。定期组织师资培训和教学交流活</div>
          <div>动，不断提升师资教学水平。<span class="text-[#aaa]">↵</span></div>
          <div class="pl-[25px]">（二）技术保障<span class="text-[#aaa]">↵</span></div>
          <div class="pl-[25px] [text-align-last:justify]">选用稳定、功能强大的网络教学平台，具备直播授课、录播播放、在线考试、学习数据统计分</div>
          <div class="[text-align-last:justify]">析、在线互动等功能，<u class="underline decoration-wavy decoration-[#2f6fd0] decoration-1 underline-offset-2">满足线上</u>教学和考核需求。同时，确保平台能够适应大量学员同时在线学习</div>
          <div>和考试，保障教学过程的流畅性。<span class="text-[#aaa]">↵</span></div>
          <div class="pl-[25px] [text-align-last:justify]">配备专业技术团队，负责平台日常维护、技术支持和数据安全保障。定期对平台进行检查和升</div>
          <div class="[text-align-last:justify]">级，及时解决学员和教师在使用过程中遇到的技术问题，确保培训顺利进行。在考试期间，安排技</div>
          <div>术人员实时监控平台运行情况，防止出现网络故障、系统崩溃等问题。<span class="text-[#aaa]">↵</span></div>
          <div class="pl-[25px]">（三）服务保障<span class="text-[#aaa]">↵</span></div>
          <div class="pl-[25px] [text-align-last:justify]">培训前服务：提供详细培训咨询，通过电话、在线客服等多种渠道，解答学员关于培训内容、</div>
          <div class="[text-align-last:justify]">方式、时间、费用等疑问；协助学员完成<u class="underline decoration-wavy decoration-[#2f6fd0] decoration-1 underline-offset-2">初证培训</u>报名和继续教育登记手续，提供清晰的报名流程</div>
          <div>和材料清单，指导学员准备相关报名材料，确保报名顺利进行。<span class="text-[#aaa]">↵</span></div>
          <div class="pl-[25px] [text-align-last:justify]">培训中服务：建立学员培训档案，记录学员的学习进度、考试成绩、课堂表现等信息，跟踪学</div>
          <div class="[text-align-last:justify]">员学习情况；定期收集学员反馈，通过在线问卷、学习群组等方式了解学员对培训内容、教学方式</div>
          <div class="[text-align-last:justify]">的意见和建议，及时调整教学内容和方式；为学员提供学习支持，如学习资料补充、学习方法指导</div>
          <div>等，帮助学员解决学习过程中遇到的困难。<span class="text-[#aaa]">↵</span></div>
          <div class="pl-[25px] [text-align-last:justify]">培训后服务：及时公布考核成绩，通过短信、邮件、平台通知等方式告知学员成绩；为<u class="underline decoration-wavy decoration-[#2f6fd0] decoration-1 underline-offset-2">初证培</u></div>
          <div class="[text-align-last:justify]"><u class="underline decoration-wavy decoration-[#2f6fd0] decoration-1 underline-offset-2">训</u>合格学员颁发证书，为完成继续教育的学员办理证书登记手续；提供证书邮寄服务，确保学员能</div>
          <div class="[text-align-last:justify]">够及时收到证书；开展培训满意度调查，收集学员意见和反馈，针对学员提出的问题进行分析和改</div>
          <div>进，持续提升服务质量，为学员提供更优质的培训服务。<span class="text-[#aaa]">↵</span></div>
          <div class="!h-[18.500px] !leading-[18.500px] text-[#aaa] mt-[2px]">↵</div>
          <div class="!h-[18.500px] !leading-[18.500px] text-[#aaa]">↵</div>
          <div class="!h-[18.500px] !leading-[18.500px] text-[#aaa]">↵</div>
          <div class="!h-[18.500px] !leading-[18.500px] text-[#aaa]">↵</div>
        </div>

        <!-- page 2 -->
        <div class="w-[710px] shrink-0 bg-white border-x border-[#c6c6c6] pt-[5px] pl-[84px] pr-[82px] *:h-[27.900px] *:leading-[27.900px] *:whitespace-nowrap">
          <div class="pl-[25px]">一、总体工作目标<span class="text-[#aaa]">↵</span></div>
          <div class="pl-[25px] [text-align-last:justify]">为切实提升住房和城乡建设领域从业人员专业技能与安全管理水平，确保培训工作高效、有序</div>
          <div class="[text-align-last:justify]">开展，针对施工现场专业人员、技能人员、建安三类人员等多类人员及不同专业培训需求，制定科</div>
          <div class="[text-align-last:justify]">学合理的工作进度计划，并采取切实可行的保证措施，确保培训覆盖率、合格率达到行业标准，为</div>
          <div>行业发展提供坚实的人才保障 。<span class="text-[#aaa]">↵</span></div>
          <div class="pl-[25px]">二、各专业培训工作进度计划<span class="text-[#aaa]">↵</span></div>
          <div class="pl-[25px]">（一）住房和城乡建设领域施工现场专业人员<span class="text-[#aaa]">↵</span></div>
          <div class="pl-[25px] [text-align-last:justify]"><u class="underline decoration-wavy decoration-[#2f6fd0] decoration-1 underline-offset-2">初证培训</u>：<span class="text-[#555]">13</span> <u class="underline decoration-wavy decoration-[#e02020] decoration-1 underline-offset-2">个</u>专业（施工员、质量员、安全员等）分批次开展培训。每季度组织 <span class="text-[#555]">2 – 3</span> <u class="underline decoration-wavy decoration-[#e02020] decoration-1 underline-offset-2">个</u></div>
          <div class="[text-align-last:justify]">专业<u class="underline decoration-wavy decoration-[#2f6fd0] decoration-1 underline-offset-2">的初证培训</u>，培训周期为 <span class="text-[#555]">15</span> 天，包含理论教学、实操演练与考核。培训后 <span class="text-[#555]">10</span> <u class="underline decoration-wavy decoration-[#e02020] decoration-1 underline-offset-2">个</u>工作日内完</div>
          <div>成成绩评定与证书发放，确保全年完成所有专业培训。<span class="text-[#aaa]">↵</span></div>
          <div class="pl-[25px] [text-align-last:justify]">继续教育：每年为已取得证书的专业人员安排继续教育，每半年集中开展一次，每次涵盖 <span class="text-[#555]">6 –</span></div>
          <div class="[text-align-last:justify]"><span class="text-[#555]">7</span> <u class="underline decoration-wavy decoration-[#e02020] decoration-1 underline-offset-2">个</u>专业，学习周期为 <span class="text-[#555]">7</span> 天，通过线上线下结合的方式完成课程学习与考核，培训结束后 <span class="text-[#555]">5</span> 个工</div>
          <div>作日内更新证书信息。<span class="text-[#aaa]">↵</span></div>
          <div class="pl-[25px]">（二）住房和城乡建设领域施工现场技能人员<span class="text-[#aaa]">↵</span></div>
          <div class="pl-[25px] [text-align-last:justify]">针对 <span class="text-[#555]">70</span> <u class="underline decoration-wavy decoration-[#e02020] decoration-1 underline-offset-2">个</u>专业（如砌筑工、钢筋工、混凝土工等），按照工种需求与人员分布，每月开展 <span class="text-[#555]">3 –</span></div>
          <div class="[text-align-last:justify]"><span class="text-[#555]">4</span> 个专业的培训，培训时长根据专业难度设定为 <span class="text-[#555]">7 – 10</span> 天。每批次培训结束后 <span class="text-[#555]">7</span> <u class="underline decoration-wavy decoration-[#e02020] decoration-1 underline-offset-2">个</u>工作日内组织</div>
          <div>考核，考核合格后 <span class="text-[#555]">15</span> 个工作日内颁发证书，确保在 <span class="text-[#555]">24</span> 个月内完成所有专业培训工作。<span class="text-[#aaa]">↵</span></div>
          <div class="pl-[25px]">（三）住房和城乡建设领域建安三类人员（<span class="text-[#555]">A</span> 证、<span class="text-[#555]">B</span> 证、<span class="text-[#555]">C</span> 证）<span class="text-[#aaa]">↵</span></div>
          <div class="pl-[25px] [text-align-last:justify]">每季度开展一期建安三类人员培训，每期培训时间为 <span class="text-[#555]">10</span> 天，涵盖法规政策、安全管理知识等</div>
          <div class="[text-align-last:justify]">内容。培训结束后 <span class="text-[#555]">5</span> <u class="underline decoration-wavy decoration-[#e02020] decoration-1 underline-offset-2">个</u>工作日内组织考试，考试合格后 <span class="text-[#555]">10</span> 个工作日内发放证书，每年确保完成 <span class="text-[#555]">4</span></div>
          <div>期培训任务。<span class="text-[#aaa]">↵</span></div>
          <div class="pl-[25px]">（四）住房和城乡建设领域建筑施工特种作业人员<span class="text-[#aaa]">↵</span></div>
          <div class="pl-[25px] [text-align-last:justify]"><span class="text-[#555]">9</span> <u class="underline decoration-wavy decoration-[#e02020] decoration-1 underline-offset-2">个</u>专业（建筑电工、建筑架子工等）实行按需培训，当报名人数达到 <span class="text-[#555]">30</span> 人及以上时，在 <span class="text-[#555]">15</span></div>
          <div class="[text-align-last:justify]">个工作日内启动培训，培训周期为 <span class="text-[#555]">12</span> 天。培训结束后 <span class="text-[#555]">7</span> <u class="underline decoration-wavy decoration-[#e02020] decoration-1 underline-offset-2">个</u>工作日内组织考核，考核通过后 <span class="text-[#555]">15</span> 个</div>
          <div>工作日内颁发证书，确保培训响应及时，不延误人员上岗需求。<span class="text-[#aaa]">↵</span></div>
          <div class="pl-[25px]">（五）特种作业操作证（应急局）<span class="text-[#aaa]">↵</span></div>
          <div class="pl-[25px] [text-align-last:justify]"><span class="text-[#555]">20</span> <u class="underline decoration-wavy decoration-[#e02020] decoration-1 underline-offset-2">个</u>专业（高压电工作业、焊接与热切割作业等）每月开展一期培训，培训时间为 <span class="text-[#555]">8</span> 天，培</div>
          <div class="[text-align-last:justify]">训结束后 <span class="text-[#555]">3</span> 个工作日内组织考试，考试合格后 <span class="text-[#555]">20</span> 个工作日内由<u class="underline decoration-wavy decoration-[#2f6fd0] decoration-1 underline-offset-2">应急局</u>发放证书，保障证书发放的</div>
          <div>规范性与时效性。<span class="text-[#aaa]">↵</span></div>
        </div>
      </div>
      <!-- red annotation box lies over the page -->
      <div class="absolute left-[830px] top-[171px] w-[607px] h-[647px] border-4 border-[#d01527]"></div>
    </div>

    <!-- scrollbar -->
    <div class="w-[14px] shrink-0 flex flex-col pt-[30px]">
      <div class="h-[2px]"></div>
      <div class="h-[797px] bg-[#f0f0f0] flex flex-col items-stretch relative">
        <div class="h-[14px] bg-white border border-[#8c8c8c] flex items-center justify-center"><svg width="7" height="4" viewBox="0 0 7 4"><path d="M3.500 0L7 4H0z" fill="#333"/></svg></div>
        <div class="mt-[712px] h-[16px] bg-white border border-[#ababab]"></div>
        <div class="mt-auto h-[15px] bg-white border border-[#8c8c8c] flex items-center justify-center"><svg width="7" height="4" viewBox="0 0 7 4"><path d="M0 0h7L3.500 4z" fill="#333"/></svg></div>
      </div>
    </div>
  </div>

  <!-- status bar -->
  <div class="h-[22px] shrink-0 bg-[#f1f1f1] border-t border-[#c6c6c6] flex items-center pl-[18px] whitespace-nowrap text-[#444]">
    <div class="w-[137px]">第 231 页，共 243 页</div>
    <div class="w-[94px]">0/60907 个字</div>
    <div class="w-[33px]"><svg width="15" height="15" viewBox="0 0 15 15"><path d="M1 1h4M1 1v10h3M6 0v15M8 1h6v10H8" fill="none" stroke="#666"/><path d="M9 3l3 3M12 3L9 6M9 8l3 3M12 8l-3 3" stroke="#666" stroke-width=".6"/></svg></div>
    <div class="w-[122px]">简体中文(中国大陆)</div>
    <div class="w-[70px]">修订: 关闭</div>
    <div class="flex items-center gap-[3px] font-bold"><svg width="18" height="17" viewBox="0 0 18 17"><path d="M9 2a6 6 0 1 0 0 12" fill="none" stroke="#666"/><path d="M7 7l8 8M15 7l-8 8" stroke="#444" stroke-width="1.600"/></svg><span class="font-bold">辅助功能: 调查</span></div>
    <div class="ml-auto flex items-center h-[21px]">
      <svg width="14" height="15" viewBox="0 0 14 15"><path d="M1 1h5l1 1 1-1h5v11H8l-1 1-1-1H1zM7 2v11M2.500 4h3M2.500 6.500h3M2.500 9h3M8.500 4h3M8.500 6.500h3M8.500 9h3" fill="none" stroke="#666"/></svg>
      <div class="ml-[14px] w-[40px] h-[21px] bg-[#c6c6c6] flex items-center justify-center"><svg width="14" height="14" viewBox="0 0 14 14"><path d="M.5.500h13v13H.5zM3 3.500h8M3 6h8M3 8.500h8M3 11h8" fill="#f1f1f1" stroke="#555"/></svg></div>
      <svg class="ml-[13px]" width="15" height="15" viewBox="0 0 15 15"><path d="M.5.500h10v12H.5zM3 3.500h5M3 6h5M3 8.500h3" fill="#f1f1f1" stroke="#666"/><circle cx="11" cy="11" r="3.500" fill="#777"/></svg>
      <svg class="ml-[16px]" width="9" height="9" viewBox="0 0 9 9"><path d="M1 4.500h7" stroke="#444"/></svg>
      <div class="ml-[5px] w-[100px] h-px bg-[#444] relative"><div class="absolute left-[43px] -top-[5px] w-[5px] h-[11px] bg-[#444]"></div><div class="absolute left-[50px] -top-[2px] w-px h-[5px] bg-[#444]"></div></div>
      <svg class="ml-[4px]" width="9" height="9" viewBox="0 0 9 9"><path d="M1 4.500h7M4.500 1v7" stroke="#444"/></svg>
      <div class="ml-[11px] w-[41px] text-[13px]">90%</div>
    </div>
  </div>
  <div class="h-[6px] shrink-0 bg-gradient-to-r from-[#1f3a44] to-[#1a2a40]"></div>
</div>
</body>
</html>
